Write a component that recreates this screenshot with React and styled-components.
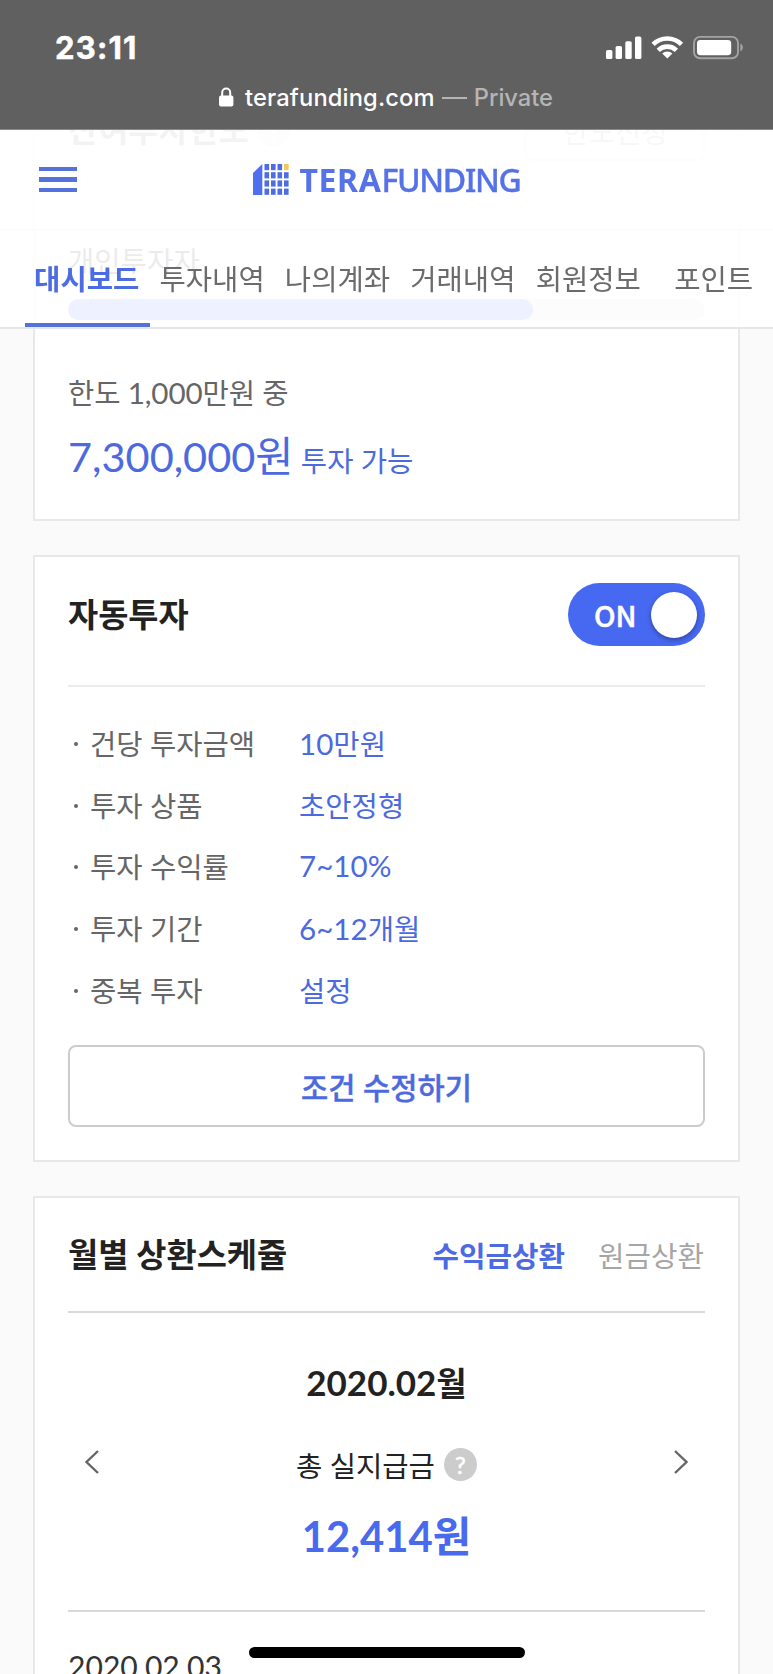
import React from 'react';
import styled, { createGlobalStyle } from 'styled-components';

const GlobalStyle = createGlobalStyle`
  * {
    box-sizing: border-box;
  }

  body {
    margin: 0;
    background: #fafafa;
    overflow: hidden;
    font-family: 'Lato', 'Noto Sans CJK KR', sans-serif;
    font-size: 28.6px;
    color: #222;
  }

  h2, p, ul {
    margin: 0;
    padding: 0;
  }

  button {
    font-family: inherit;
    font-size: inherit;
    padding: 0;
  }
`

const tabs = ['대시보드', '투자내역', '나의계좌', '거래내역', '회원정보', '포인트']

const conditions = [
  { label: '건당 투자금액', number: '10', unit: '만원' },
  { label: '투자 상품', unit: '초안정형' },
  { label: '투자 수익률', number: '7~10%' },
  { label: '투자 기간', number: '6~12', unit: '개월' },
  { label: '중복 투자', unit: '설정' },
]

function Logo() {
  const cols = [11.5, 18, 24.5, 31]
  const rows = [0, 8.2, 16.4, 24.6]
  return (
    <svg width="36" height="31" viewBox="0 0 36 31">
      <path d="M0 9 9.3 0v31H0z" fill="#4f6ff0" />
      {rows.map((y) => cols.map((x) => (
        <rect key={x + '-' + y} x={x} y={y} width="4.6" height="6.2" fill={y === 0 && x === 31 ? '#efc95c' : '#4f6de0'} />
      )))}
    </svg>
  )
}

function StatusIcons() {
  return (
    <svg width="140" height="26" viewBox="605 35 140 26" fill="#fff">
      <rect x="606" y="50" width="6.4" height="9" rx="1.6" />
      <rect x="615.6" y="46" width="6.4" height="13" rx="1.6" />
      <rect x="625.3" y="41.2" width="6.4" height="17.8" rx="1.6" />
      <rect x="635" y="36.5" width="6.4" height="22.5" rx="1.6" />
      <g fill="none" stroke="#fff" strokeWidth="4.6">
        <path d="M653.1 44.3a20.2 20.2 0 0 1 28.4 0" />
        <path d="M658.2 50.3a13 13 0 0 1 18.2 0" />
      </g>
      <path d="M667.3 58.6l-5.1-5.1a7.2 7.2 0 0 1 10.2 0z" />
      <rect x="694" y="36.9" width="44" height="21.4" rx="6" fill="none" stroke="#a3a3a3" strokeWidth="1.9" />
      <rect x="697" y="40" width="34.2" height="15.2" rx="3.4" />
      <path d="M740.3 43.6a4.4 4.4 0 0 1 0 8z" fill="#a3a3a3" />
    </svg>
  )
}

function App() {
  return (
    <Page>
      <GlobalStyle />

      <StatusBar>
        <StatusRow>
          <Clock>23:11</Clock>
          <StatusIcons />
        </StatusRow>
        <Address>
          <svg width="15" height="20" viewBox="0 0 15 20">
            <rect x="0" y="8.6" width="14.4" height="11" rx="2" fill="#fff" />
            <path d="M3.2 9.5V5.6a4 4 0 0 1 8 0v3.9" fill="none" stroke="#fff" strokeWidth="2" />
          </svg>
          <Domain>terafunding.com</Domain>
          <Private><Dash />Private</Private>
        </Address>
      </StatusBar>

      <TopBar>
        <MenuButton aria-label="menu"><i /><i /><i /></MenuButton>
        <Brand>
          <Logo />
          <BrandName><b>TERA</b>FUNDING</BrandName>
        </Brand>
      </TopBar>

      <TabBar>
        {tabs.map((tab, index) => (
          <Tab key={tab} $active={index === 0}>{tab}</Tab>
        ))}
      </TabBar>

      <Cards>
        <Card>
          <LimitHeader>
            <Title>잔여투자한도</Title>
            <Help>?</Help>
            <LimitButton>한도신청</LimitButton>
          </LimitHeader>
          <Investor>개인투자자</Investor>
          <Track><Bar /></Track>
          <Limit>한도 <Num>1,000</Num>만원 중</Limit>
          <Available><strong>7,300,000원</strong> 투자 가능</Available>
        </Card>

        <Card>
          <AutoHeader>
            <Title>자동투자</Title>
            <Toggle>ON<Knob /></Toggle>
          </AutoHeader>
          <ConditionList>
            {conditions.map((item) => (
              <Condition key={item.label}>
                <Dot />
                <Label>{item.label}</Label>
                <Value>{item.number && <Num>{item.number}</Num>}{item.unit}</Value>
              </Condition>
            ))}
          </ConditionList>
          <EditButton>조건 수정하기</EditButton>
        </Card>

        <Card>
          <ScheduleHeader>
            <Title>월별 상환스케쥴</Title>
            <Filter $active>수익금상환</Filter>
            <Filter>원금상환</Filter>
          </ScheduleHeader>
          <Month>
            <Chevron width="14" height="24" viewBox="0 0 14 24"><path d="M13 1 1.5 12 13 23" /></Chevron>
            <MonthBody>
              <MonthName>2020.02<span>월</span></MonthName>
              <Payout>총 실지급금 <Help>?</Help></Payout>
              <Amount>12,414원</Amount>
            </MonthBody>
            <Chevron width="14" height="24" viewBox="0 0 14 24"><path d="M1 1 12.5 12 1 23" /></Chevron>
          </Month>
          <PayDate>2020.02.03</PayDate>
        </Card>
      </Cards>

      <HomeIndicator />
    </Page>
  );
}

export default App;


const Page = styled.div`
  position: relative;
  height: 1674px;
  width: 773px;
  overflow: hidden;
`

const StatusBar = styled.header`
  position: fixed;
  z-index: 3;
  top: 0;
  left: 0;
  width: 773px;
  height: 130px;
  background: #606060;
  border-bottom: 1px solid #8a8a8a;
  font-family: 'Inter', sans-serif;
  color: #fff;
`

const StatusRow = styled.div`
  display: flex;
  justify-content: space-between;
  align-items: center;
  padding: 0 28px 0 55px;
  height: 60px;
  margin-top: 18px;
`

const Clock = styled.span`
  padding-bottom: 2px;
  font-size: 31px;
  font-weight: 700;
  letter-spacing: 1.2px;
  -webkit-text-stroke: 0.5px #fff;
`

const Address = styled.div`
  display: flex;
  align-items: center;
  margin-left: 219px;
  height: 38px;
  font-size: 23.7px;
  font-weight: 500;
`

const Domain = styled.span`
  margin-left: 11px;
  letter-spacing: 0.15px;
`

const Private = styled.span`
  display: flex;
  align-items: center;
  color: #b5b5b5;
`

const Dash = styled.i`
  width: 25px;
  height: 2px;
  margin: 2px 7px 0;
  background: #b5b5b5;
`

const TopBar = styled.div`
  position: fixed;
  z-index: 2;
  top: 130px;
  left: 0;
  width: 773px;
  height: 100px;
  display: flex;
  align-items: center;
  padding-left: 39px;
  background: rgba(255, 255, 255, 0.95);
  border-bottom: 1px solid #fafafa;
`

const MenuButton = styled.button`
  display: flex;
  flex-direction: column;
  gap: 6.3px;
  width: 38px;
  border: 0;
  background: none;

  i {
    height: 4.2px;
    background: #5472dc;
  }
`

const Brand = styled.div`
  display: flex;
  align-items: center;
  margin-left: 175.5px;
`

const BrandName = styled.span`
  margin-left: 11px;
  font-family: 'Noto Sans', sans-serif;
  font-size: 32px;
  font-weight: 500;
  line-height: 40px;
  letter-spacing: -1.3px;
  color: #5572e6;
  -webkit-text-stroke: 0.4px #5572e6;

  b {
    letter-spacing: 0.6px;
    -webkit-text-stroke: 0;
  }
`

const TabBar = styled.nav`
  position: fixed;
  z-index: 2;
  top: 230px;
  left: 0;
  width: 773px;
  height: 99px;
  display: flex;
  padding-left: 25px;
  overflow: hidden;
  background: rgba(255, 255, 255, 0.9);
  border-bottom: 2px solid #e6e6e6;
`

const Tab = styled.span`
  flex: 0 0 125.4px;
  height: 98px;
  padding-right: 2px;
  text-align: center;
  line-height: 99px;
  color: ${(props) => (props.$active ? '#4d6ce2' : '#6b6b6b')};
  font-weight: ${(props) => (props.$active ? 700 : 400)};
  border-bottom: 5px solid ${(props) => (props.$active ? '#5572dc' : 'transparent')};
`

const Cards = styled.main`
  display: flex;
  flex-direction: column;
  gap: 34px;
  width: 707px;
  margin-left: 33px;
`

const Card = styled.section`
  padding: 0 33px;
  background: #fff;
  border: 2px solid #e8e8e8;

  &:first-child {
    height: 521px;
    padding-top: 100px;
    border-top: 0;
  }

  &:nth-child(2) {
    height: 607px;
  }

  &:last-child {
    height: 520px;
  }
`

const Title = styled.h2`
  font-size: 32.8px;
  line-height: 48px;
  font-weight: 700;
  color: #222;
`

const Num = styled.span`
  font-size: 29.6px;
`

const Help = styled.span`
  display: inline-flex;
  align-items: center;
  justify-content: center;
  width: 33px;
  height: 33px;
  border-radius: 50%;
  background: #ccc;
  color: #fff;
  font-size: 24px;
  font-weight: 400;
  -webkit-text-stroke: 0.6px #fff;
`

const LimitHeader = styled.div`
  display: flex;
  align-items: center;
  height: 60px;
  gap: 8px;
`

const LimitButton = styled.button`
  width: 180px;
  height: 62px;
  margin-left: auto;
  border: 2px solid #ccc;
  border-radius: 6px;
  background: #fff;
  color: #666;
`

const Investor = styled.p`
  margin-top: 79px;
  line-height: 44px;
  color: #333;
`

const Track = styled.div`
  height: 21px;
  margin-top: 16px;
  border-radius: 11px;
  background: #e0e0e0;
`

const Bar = styled.div`
  width: 73%;
  height: 21px;
  border-radius: 11px;
  background: #4f76f8;
`

const Limit = styled.p`
  margin-top: 51px;
  line-height: 44px;
  letter-spacing: -0.1px;
  color: #666;
`

const Available = styled.p`
  margin-top: 10px;
  line-height: 62px;
  color: #4c6ade;

  strong {
    font-size: 41.5px;
    font-weight: 400;
  }
`

const AutoHeader = styled.div`
  display: flex;
  align-items: center;
  justify-content: space-between;
  height: 130px;
  padding-bottom: 13px;
  border-bottom: 2px solid #ebebeb;
`

const Toggle = styled.span`
  display: flex;
  align-items: center;
  justify-content: space-between;
  width: 137px;
  height: 63px;
  padding: 0 8px 0 26px;
  border-radius: 32px;
  background: #4769f2;
  color: #fff;
  font-family: 'Noto Sans CJK KR', sans-serif;
  font-weight: 500;
  line-height: 40px;
  -webkit-text-stroke: 0.5px #fff;
`

const Knob = styled.i`
  width: 46px;
  height: 46px;
  border-radius: 50%;
  background: #fff;
  box-shadow: 0 2px 5px rgba(0, 0, 0, 0.35);
`

const ConditionList = styled.ul`
  margin-top: 26px;
  list-style: none;
`

const Condition = styled.li`
  display: flex;
  align-items: center;
  height: 61.8px;
`

const Dot = styled.i`
  width: 4px;
  height: 4px;
  margin: 0 12px 0 6px;
  border-radius: 50%;
  background: #666;
`

const Label = styled.span`
  width: 209px;
  padding-bottom: 3px;
  color: #666;
`

const Value = styled.span`
  padding-bottom: 3px;
  color: #4c6ade;
`

const EditButton = styled.button`
  display: block;
  width: 637px;
  height: 82px;
  margin-top: 23px;
  padding-top: 2px;
  border: 2px solid #ccc;
  border-radius: 8px;
  background: #fff;
  color: #4c6ade;
  font-size: 29.6px;
  font-weight: 500;
  -webkit-text-stroke: 0.4px #4c6ade;
`

const ScheduleHeader = styled.div`
  display: flex;
  align-items: center;
  height: 115px;
  border-bottom: 2px solid #d9d9d9;

  ${Title} {
    margin-right: auto;
  }
`

const Filter = styled.span`
  margin-left: 33px;
  font-size: 28.8px;
  color: ${(props) => (props.$active ? '#4c6ae4' : '#a6a6a6')};
  font-weight: ${(props) => (props.$active ? 700 : 400)};

  &:last-child {
    margin-right: 1px;
  }
`

const Month = styled.div`
  display: flex;
  align-items: center;
  justify-content: space-between;
  height: 299px;
  padding: 0 17px;
  border-bottom: 2px solid #d9d9d9;
`

const MonthBody = styled.div`
  display: flex;
  flex-direction: column;
  align-items: center;
`

const MonthName = styled.p`
  font-size: 35px;
  line-height: 50px;
  font-weight: 700;

  span {
    font-size: 33px;
  }
`

const Payout = styled.p`
  display: flex;
  align-items: center;
  gap: 9px;
  height: 44px;
  margin: 34px 0 20px;
`

const Amount = styled.p`
  font-size: 41.8px;
  line-height: 60px;
  font-weight: 700;
  color: #496aec;
`

const Chevron = styled.svg`
  fill: none;
  stroke: #666;
  stroke-width: 2.4;
`

const PayDate = styled.p`
  margin-top: 32px;
  font-size: 30.1px;
  line-height: 44px;
  color: #333;
`

const HomeIndicator = styled.div`
  position: fixed;
  z-index: 3;
  left: 249px;
  top: 1647px;
  width: 276px;
  height: 11px;
  border-radius: 6px;
  background: #000;
`
